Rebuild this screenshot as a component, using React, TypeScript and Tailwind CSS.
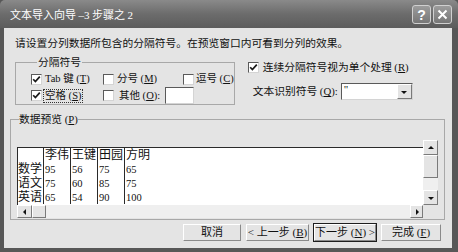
import React from 'react';

const CB = ({ on }: { on?: boolean }) => (
  <span className="w-[11px] h-[11px] shrink-0 bg-white border border-t-[#5a5a5a] border-l-[#5a5a5a] border-r-[#d4d4d4] border-b-[#d4d4d4] flex items-center justify-center">
    {on && (
      <svg width="9" height="9" viewBox="0 0 9 9">
        <path d="M1.2 4.2 L3.4 6.6 L7.8 1.6" stroke="#1a1a1a" strokeWidth="1.7" fill="none" />
      </svg>
    )}
  </span>
);

const U = ({ c }: { c: string }) => <span className="underline underline-offset-1">{c}</span>;

const Btn = ({ w, children, def }: { w: string; children: React.ReactNode; def?: boolean }) => (
  <div className={`${w} h-[19px] ${def ? 'border border-[#1e1e1e]' : 'border border-transparent'}`}>
    <div className="w-full h-full flex items-center justify-center whitespace-nowrap border border-t-white border-l-white border-r-[#8a8a8a] border-b-[#8a8a8a] bg-[#e4e4e4] text-[11px] text-[#111]">
      {children}
    </div>
  </div>
);

const Arrow = ({ dir }: { dir: 'up' | 'down' | 'left' | 'right' }) => {
  const d = {
    up: 'M1 5 L4 2 L7 5 Z',
    down: 'M1 3 L4 6 L7 3 Z',
    left: 'M5 1 L2 4 L5 7 Z',
    right: 'M3 1 L6 4 L3 7 Z',
  }[dir];
  return (
    <svg width="8" height="8" viewBox="0 0 8 8">
      <path d={d} fill="#111" />
    </svg>
  );
};

const Raised = ({ cls, children }: { cls: string; children?: React.ReactNode }) => (
  <div className={`${cls} shrink-0 bg-[#e4e4e4] border border-t-white border-l-white border-r-[#7a7a7a] border-b-[#7a7a7a] flex items-center justify-center`}>
    {children}
  </div>
);

const rows = [
  ['', '李伟', '王键', '田园', '方明'],
  ['数学', '95', '56', '75', '65'],
  ['语文', '75', '60', '85', '75'],
  ['英语', '65', '54', '90', '100'],
];

const App = () => {
  return (
    <div className="w-[458px] h-[252px] bg-[#575757] flex flex-col overflow-hidden font-['Liberation_Serif','Noto_Sans_CJK_SC',serif] text-[#111]">
      {/* Title bar */}
      <div className="h-[28px] shrink-0 flex items-center justify-between pl-[10px] pr-[6px] bg-gradient-to-b from-[#8a8a8a] via-[#6c6c6c] to-[#5c5c5c] rounded-t-[5px]">
        <span className="text-white text-[11px] leading-[14px] font-['Noto_Sans_CJK_SC',sans-serif]">
          文本导入向导 <span className="font-['Liberation_Serif',serif]">–3</span> 步骤之 <span className="font-['Liberation_Serif',serif]">2</span>
        </span>
        <div className="flex gap-[2px] pt-[1px]">
          <div className="w-[19px] h-[19px] rounded-[3px] border border-[#d0d0d0] bg-gradient-to-b from-[#9c9c9c] to-[#777] flex items-center justify-center text-white text-[14px] font-bold leading-none font-['Liberation_Sans',sans-serif]">
            ?
          </div>
          <div className="w-[19px] h-[19px] rounded-[3px] border border-[#d0d0d0] bg-gradient-to-b from-[#9c9c9c] to-[#777] flex items-center justify-center">
            <svg width="11" height="11" viewBox="0 0 11 11">
              <path d="M1.5 1.5 L9.5 9.5 M9.5 1.5 L1.5 9.5" stroke="white" strokeWidth="2" />
            </svg>
          </div>
        </div>
      </div>

      {/* Body */}
      <div className="flex-1 ml-[4px] mr-[6px] mb-[4px] bg-[#e4e4e4] flex flex-col">
        <p className="mt-[8px] ml-[11px] text-[10.75px] leading-[14px] whitespace-nowrap">
          请设置分列数据所包含的分隔符号。在预览窗口内可看到分列的效果。
        </p>

        <div className="flex mt-[5px] whitespace-nowrap">
          {/* 分隔符号 */}
          <fieldset className="ml-[11px] w-[219px] h-[50px] border border-[#a8a8a8] pl-[15px] pt-[3px]">
            <legend className="ml-[6px] px-[1px] text-[10.75px] leading-[14px]">分隔符号</legend>
            <div className="flex items-center h-[14px] text-[10.5px]">
              <div className="w-[72px] shrink-0 flex items-center gap-[3px]">
                <CB on />
                <span>Tab 键 (<U c="T" />)</span>
              </div>
              <div className="w-[80px] shrink-0 flex items-center gap-[3px]">
                <CB />
                <span>分号 (<U c="M" />)</span>
              </div>
              <div className="shrink-0 flex items-center gap-[2px]">
                <CB />
                <span>逗号 (<U c="C" />)</span>
              </div>
            </div>
            <div className="flex items-center h-[17px] mt-[1px] text-[10.5px]">
              <div className="w-[72px] shrink-0 flex items-center gap-[2px]">
                <CB on />
                <span className="outline outline-1 outline-dotted outline-[#333] px-[1px] leading-[12px]">空格 (<U c="S" />)</span>
              </div>
              <div className="shrink-0 flex items-center gap-[5px]">
                <CB />
                <span>其他 (<U c="O" />):</span>
              </div>
              <div className="ml-[5px] shrink-0 w-[29px] h-[17px] bg-white border border-t-[#5a5a5a] border-l-[#5a5a5a] border-r-[#d4d4d4] border-b-[#d4d4d4]" />
            </div>
          </fieldset>

          {/* Right column */}
          <div className="ml-[13px] pt-[5px] flex flex-col text-[10.75px]">
            <div className="flex items-center h-[14px] gap-[4px]">
              <CB on />
              <span>连续分隔符号视为单个处理 (<U c="R" />)</span>
            </div>
            <div className="flex items-center mt-[9px] pl-[5px]">
              <span className="w-[88px]">文本识别符号 (<U c="Q" />):</span>
              <div className="w-[72px] h-[17px] bg-white border border-t-[#5a5a5a] border-l-[#5a5a5a] border-r-[#d4d4d4] border-b-[#d4d4d4] flex justify-between">
                <span className="pl-[2px] leading-[11px] text-[11px]">"</span>
                <Raised cls="w-[15px] h-full">
                  <Arrow dir="down" />
                </Raised>
              </div>
            </div>
          </div>
        </div>

        {/* 数据预览 */}
        <fieldset className="mt-[7px] ml-[6px] w-[435px] h-[108px] border border-[#a8a8a8] pl-[6px]">
          <legend className="ml-[2px] text-[10.75px] leading-[14px]">数据预览 (<U c="P" />)</legend>
          <div className="mt-[14px] flex flex-col w-[421px]">
            <div className="flex">
              <div className="w-[406px] pt-[7px]">
                <div className="h-[58px] bg-white border-l border-t border-[#2a2a2a] flex flex-col overflow-hidden">
                  {rows.map((r, i) => (
                    <div key={i} className="flex h-[14px] items-center">
                      {r.map((c, j) => (
                        <div
                          key={j}
                          className={`h-full flex items-center leading-[13px] ${
                            j === 0 ? 'w-[25px]' : j === 4 ? 'flex-1 pl-[1px] border-l border-[#2a2a2a]' : 'w-[27px] pl-[1px] border-l border-[#2a2a2a]'
                          } ${i === 0 || j === 0 ? 'text-[12px]' : 'text-[10.5px]'}`}
                        >
                          {c}
                        </div>
                      ))}
                    </div>
                  ))}
                </div>
              </div>
              <div className="w-[15px] h-[65px] flex flex-col bg-[#efefef]">
                <Raised cls="w-[15px] h-[15px]">
                  <Arrow dir="up" />
                </Raised>
                <Raised cls="w-[15px] h-[23px]" />
                <div className="flex-1" />
                <Raised cls="w-[15px] h-[15px]">
                  <Arrow dir="down" />
                </Raised>
              </div>
            </div>
            <div className="flex h-[13px]">
              <div className="w-[406px] flex bg-[#efefef]">
                <Raised cls="w-[15px] h-[13px]">
                  <Arrow dir="left" />
                </Raised>
                <Raised cls="w-[14px] h-[13px]" />
                <div className="flex-1" />
                <Raised cls="w-[13px] h-[13px]">
                  <Arrow dir="right" />
                </Raised>
              </div>
              <div className="w-[15px] bg-[#e4e4e4]" />
            </div>
          </div>
        </fieldset>

        {/* Buttons */}
        <div className="mt-[3px] flex justify-end gap-[3px] pr-[10px]">
          <Btn w="w-[60px]">取消</Btn>
          <Btn w="w-[65px]">
            &lt; 上一步 (<U c="B" />)
          </Btn>
          <Btn w="w-[64px]" def>
            下一步 (<U c="N" />) &gt;
          </Btn>
          <Btn w="w-[62px]">
            完成 (<U c="F" />)
          </Btn>
        </div>
      </div>
    </div>
  );
};

export default App;
